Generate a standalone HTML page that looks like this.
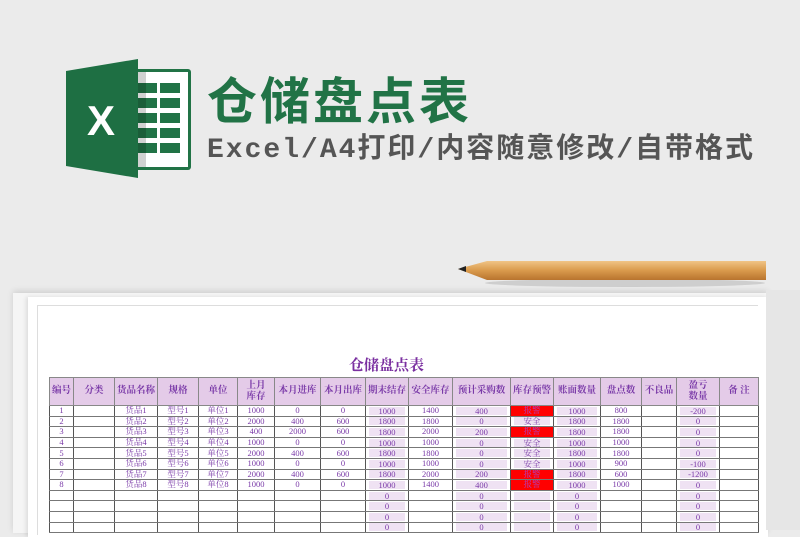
<!DOCTYPE html>
<html><head><meta charset="utf-8"><style>
*{margin:0;padding:0;box-sizing:border-box}
body{width:800px;height:526px;background:#ebebeb;position:relative;overflow:hidden;font-family:"Liberation Sans","Noto Sans CJK SC",sans-serif}
.abs{position:absolute}
table{border-collapse:collapse;table-layout:fixed;position:absolute;left:49px;top:377px;font-family:"Liberation Serif","Noto Serif CJK SC",serif;color:#7a3aa8}
td{border:1px solid #666;text-align:center;font-size:8.5px;line-height:9px;padding:0;white-space:nowrap;overflow:hidden}
tr.h td{background:#e4cbe8;font-weight:bold;font-size:9.5px;line-height:11px;height:28px;border-color:#888}
tr.d td{height:10.6px;border-left-color:#555;border-right-color:#555;border-top:1px solid #777;border-bottom:1px solid #777}
td.p{background:#fff;}
td.p span{display:block;background:#efe2f3;margin:0 3px;height:8px;line-height:8px}
td.r{background:#f00;color:#b040c0}
</style></head><body>
<svg class="abs" style="left:60px;top:55px" width="140" height="130" viewBox="60 55 140 130">
<rect x="133" y="69" width="58" height="101" rx="3" fill="#217346"/>
<rect x="136" y="72" width="52" height="95" fill="#fff"/>
<g fill="#217346">
<rect x="138" y="83" width="19" height="10"/><rect x="160" y="83" width="20" height="10"/>
<rect x="138" y="98" width="19" height="10"/><rect x="160" y="98" width="20" height="10"/>
<rect x="138" y="113" width="19" height="10"/><rect x="160" y="113" width="20" height="10"/>
<rect x="138" y="128" width="19" height="10"/><rect x="160" y="128" width="20" height="10"/>
<rect x="138" y="143" width="19" height="10"/><rect x="160" y="143" width="20" height="10"/>
</g>
<rect x="136" y="72" width="10" height="95" fill="#000" opacity="0.18"/>
<polygon points="66,71 138,59 138,178 66,166" fill="#1e6f43"/>
<text x="101" y="135" font-family="Liberation Sans" font-weight="bold" font-size="42" fill="#fff" text-anchor="middle">X</text>
</svg>
<div class="abs" style="left:207px;top:68px;font-size:50px;font-weight:bold;color:#217346;font-family:'Noto Sans CJK SC',sans-serif;line-height:60px;letter-spacing:3px">仓储盘点表</div>
<div class="abs" style="left:207px;top:134px;font-size:28px;font-weight:bold;color:#555;font-family:'Liberation Mono','Noto Sans CJK SC',monospace;line-height:34px;letter-spacing:2px">Excel/A4打印/内容随意修改/自带格式</div>
<svg class="abs" style="left:455px;top:255px" width="315" height="35">
<defs><linearGradient id="w" x1="0" y1="0" x2="0" y2="1"><stop offset="0" stop-color="#f0c486"/><stop offset="0.5" stop-color="#d99a4c"/><stop offset="1" stop-color="#b8742e"/></linearGradient></defs>
<ellipse cx="170" cy="28" rx="140" ry="4" fill="#000" opacity="0.12"/>
<polygon points="3,14 32,6 311,6 311,25 32,25" fill="url(#w)"/>
<polygon points="3,14 11,11 11,17" fill="#222"/>
</svg>
<div class="abs" style="left:13px;top:293px;width:755px;height:240px;background:#f5f5f5;box-shadow:0 -2px 6px rgba(0,0,0,.12)"></div>
<div class="abs" style="left:28px;top:297px;width:740px;height:240px;background:#fff;box-shadow:-2px 0 4px rgba(0,0,0,.1)"></div>
<div class="abs" style="left:37px;top:305px;width:721px;height:230px;background:#fff;border-top:1px solid #ddd;border-left:1px solid #ddd"></div>
<div class="abs" style="left:766px;top:290px;width:34px;height:240px;background:#e6e6e6"></div>
<div class="abs" style="left:349px;top:355px;font-size:15px;font-weight:bold;color:#7a2fa0;font-family:'Noto Serif CJK SC',serif;line-height:20px">仓储盘点表</div>
<table>
<colgroup><col style="width:24px"><col style="width:41px"><col style="width:43px"><col style="width:41px"><col style="width:39px"><col style="width:37px"><col style="width:46px"><col style="width:45px"><col style="width:43px"><col style="width:44px"><col style="width:58px"><col style="width:43px"><col style="width:47px"><col style="width:41px"><col style="width:35px"><col style="width:43px"><col style="width:39px"></colgroup>
<tr class="h"><td>编号</td><td>分类</td><td>货品名称</td><td>规格</td><td>单位</td><td>上月<br>库存</td><td>本月进库</td><td>本月出库</td><td>期末结存</td><td>安全库存</td><td>预计采购数</td><td>库存预警</td><td>账面数量</td><td>盘点数</td><td>不良品</td><td>盈亏<br>数量</td><td>备 注</td></tr>
<tr class="d"><td>1</td><td></td><td>货品1</td><td>型号1</td><td>单位1</td><td>1000</td><td>0</td><td>0</td><td class="p"><span>1000</span></td><td>1400</td><td class="p"><span>400</span></td><td class="r">报警</td><td class="p"><span>1000</span></td><td>800</td><td></td><td class="p"><span>-200</span></td><td></td></tr>
<tr class="d"><td>2</td><td></td><td>货品2</td><td>型号2</td><td>单位2</td><td>2000</td><td>400</td><td>600</td><td class="p"><span>1800</span></td><td>1800</td><td class="p"><span>0</span></td><td class="p"><span>安全</span></td><td class="p"><span>1800</span></td><td>1800</td><td></td><td class="p"><span>0</span></td><td></td></tr>
<tr class="d"><td>3</td><td></td><td>货品3</td><td>型号3</td><td>单位3</td><td>400</td><td>2000</td><td>600</td><td class="p"><span>1800</span></td><td>2000</td><td class="p"><span>200</span></td><td class="r">报警</td><td class="p"><span>1800</span></td><td>1800</td><td></td><td class="p"><span>0</span></td><td></td></tr>
<tr class="d"><td>4</td><td></td><td>货品4</td><td>型号4</td><td>单位4</td><td>1000</td><td>0</td><td>0</td><td class="p"><span>1000</span></td><td>1000</td><td class="p"><span>0</span></td><td class="p"><span>安全</span></td><td class="p"><span>1000</span></td><td>1000</td><td></td><td class="p"><span>0</span></td><td></td></tr>
<tr class="d"><td>5</td><td></td><td>货品5</td><td>型号5</td><td>单位5</td><td>2000</td><td>400</td><td>600</td><td class="p"><span>1800</span></td><td>1800</td><td class="p"><span>0</span></td><td class="p"><span>安全</span></td><td class="p"><span>1800</span></td><td>1800</td><td></td><td class="p"><span>0</span></td><td></td></tr>
<tr class="d"><td>6</td><td></td><td>货品6</td><td>型号6</td><td>单位6</td><td>1000</td><td>0</td><td>0</td><td class="p"><span>1000</span></td><td>1000</td><td class="p"><span>0</span></td><td class="p"><span>安全</span></td><td class="p"><span>1000</span></td><td>900</td><td></td><td class="p"><span>-100</span></td><td></td></tr>
<tr class="d"><td>7</td><td></td><td>货品7</td><td>型号7</td><td>单位7</td><td>2000</td><td>400</td><td>600</td><td class="p"><span>1800</span></td><td>2000</td><td class="p"><span>200</span></td><td class="r">报警</td><td class="p"><span>1800</span></td><td>600</td><td></td><td class="p"><span>-1200</span></td><td></td></tr>
<tr class="d"><td>8</td><td></td><td>货品8</td><td>型号8</td><td>单位8</td><td>1000</td><td>0</td><td>0</td><td class="p"><span>1000</span></td><td>1400</td><td class="p"><span>400</span></td><td class="r">报警</td><td class="p"><span>1000</span></td><td>1000</td><td></td><td class="p"><span>0</span></td><td></td></tr>
<tr class="d"><td></td><td></td><td></td><td></td><td></td><td></td><td></td><td></td><td class="p"><span>0</span></td><td></td><td class="p"><span>0</span></td><td class="p"><span></span></td><td class="p"><span>0</span></td><td></td><td></td><td class="p"><span>0</span></td><td></td></tr>
<tr class="d"><td></td><td></td><td></td><td></td><td></td><td></td><td></td><td></td><td class="p"><span>0</span></td><td></td><td class="p"><span>0</span></td><td class="p"><span></span></td><td class="p"><span>0</span></td><td></td><td></td><td class="p"><span>0</span></td><td></td></tr>
<tr class="d"><td></td><td></td><td></td><td></td><td></td><td></td><td></td><td></td><td class="p"><span>0</span></td><td></td><td class="p"><span>0</span></td><td class="p"><span></span></td><td class="p"><span>0</span></td><td></td><td></td><td class="p"><span>0</span></td><td></td></tr>
<tr class="d"><td></td><td></td><td></td><td></td><td></td><td></td><td></td><td></td><td class="p"><span>0</span></td><td></td><td class="p"><span>0</span></td><td class="p"><span></span></td><td class="p"><span>0</span></td><td></td><td></td><td class="p"><span>0</span></td><td></td></tr>
</table>
</body></html>
